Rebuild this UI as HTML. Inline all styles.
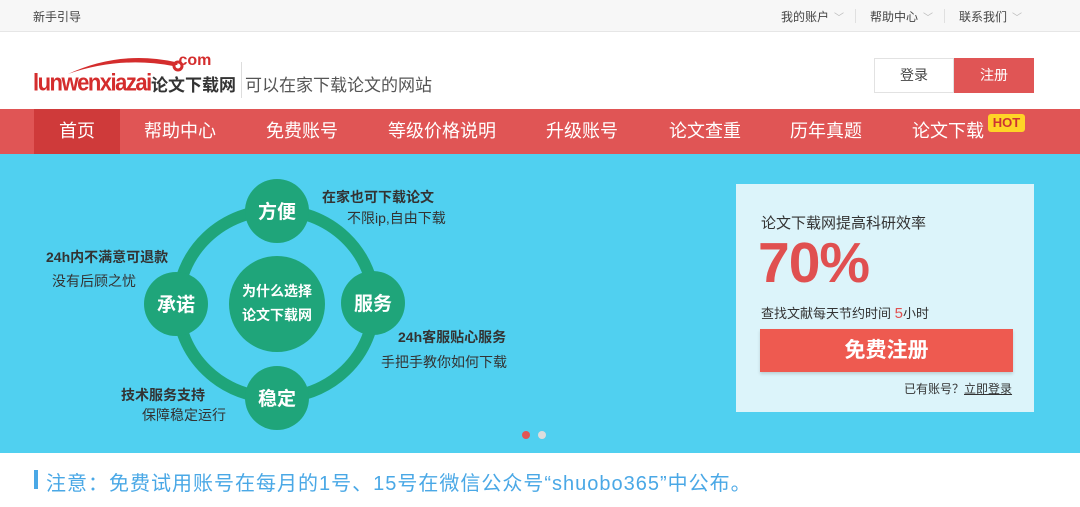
<!DOCTYPE html>
<html><head><meta charset="utf-8"><style>
*{margin:0;padding:0;box-sizing:border-box}
body{width:1080px;height:507px;overflow:hidden;background:#fff;font-family:"Liberation Sans","Noto Sans CJK SC",sans-serif;position:relative}
.top{position:absolute;left:0;top:0;width:1080px;height:32px;background:#f7f7f7;border-bottom:1px solid #e6e6e6;font-size:12px;color:#444}
.top span{position:absolute;top:8px}
.top i{font-style:normal;color:#bbb;font-size:10px;margin-left:5px}
.sep{position:absolute;top:9px;width:1px;height:14px;background:#e0e0e0}
.nav{position:absolute;left:0;top:109px;width:1080px;height:45px;background:#e05555}
.nav .it{position:absolute;top:0;height:45px;line-height:45px;color:#fff;font-size:18px;transform:translateX(-50%);white-space:nowrap}
.banner{position:absolute;left:0;top:154px;width:1080px;height:299px;background:#50d0f0}
.card{position:absolute;left:736px;top:184px;width:298px;height:228px;background:#dcf4fa}
.t{position:absolute;white-space:nowrap;color:#333}
</style></head><body>
<div class="top">
<span style="left:33px">新手引导</span>
<span style="left:781px">我的账户<i>﹀</i></span><div class="sep" style="left:855px"></div>
<span style="left:870px">帮助中心<i>﹀</i></span><div class="sep" style="left:944px"></div>
<span style="left:959px">联系我们<i>﹀</i></span>
</div>
<svg style="position:absolute;left:60px;top:50px" width="150" height="30"><path d="M8 24 Q60 0 115 12 L113 16 Q60 6 8 24Z" fill="#d42d2d"/><circle cx="118" cy="16" r="4" fill="none" stroke="#d42d2d" stroke-width="3"/></svg>
<div class="t" style="left:174px;top:52px;font-size:16px;font-weight:bold;color:#d42d2d">.com</div>
<div class="t" style="left:33px;top:70px;font-size:22px;font-weight:bold;color:#d42d2d;letter-spacing:-1.5px;transform:scaleY(1.1)">lunwenxiazai</div>
<div class="t" style="left:151px;top:71px;font-size:17px;font-weight:bold;color:#333">论文下载网</div>
<div style="position:absolute;left:241px;top:62px;width:1px;height:36px;background:#ddd"></div>
<div class="t" style="left:245px;top:71px;font-size:17px;color:#555">可以在家下载论文的网站</div>
<div style="position:absolute;left:874px;top:58px;width:80px;height:35px;border:1px solid #e2e2e2;text-align:center;line-height:33px;font-size:14px;color:#444">登录</div>
<div style="position:absolute;left:954px;top:58px;width:80px;height:35px;background:#e05555;text-align:center;line-height:35px;font-size:14px;color:#fff">注册</div>
<div class="nav">
<div style="position:absolute;left:34px;top:0;width:86px;height:45px;background:#cf3a3a"></div>
<div class="it" style="left:77px">首页</div>
<div class="it" style="left:180px">帮助中心</div>
<div class="it" style="left:302px">免费账号</div>
<div class="it" style="left:442px">等级价格说明</div>
<div class="it" style="left:582px">升级账号</div>
<div class="it" style="left:705px">论文查重</div>
<div class="it" style="left:826px">历年真题</div>
<div class="it" style="left:948px">论文下载</div>
<div style="position:absolute;left:988px;top:5px;width:37px;height:18px;background:#ffd426;border-radius:3px;font-size:13px;font-weight:bold;color:#c33;text-align:center;line-height:18px">HOT</div>
</div>
<div class="banner"></div>
<svg style="position:absolute;left:0;top:154px" width="540" height="299">
<ellipse cx="276" cy="150" rx="98" ry="94" fill="none" stroke="#1fa57a" stroke-width="12"/>
<g fill="#1fa57a"><circle cx="277" cy="57" r="32"/><circle cx="277" cy="244" r="32"/><circle cx="176" cy="150" r="32"/><circle cx="373" cy="149" r="32"/><circle cx="277" cy="150" r="48"/></g>
<g fill="#fff" font-weight="bold" text-anchor="middle" font-family="Liberation Sans,Noto Sans CJK SC,sans-serif">
<text x="277" y="64" font-size="19">方便</text><text x="277" y="251" font-size="19">稳定</text><text x="176" y="157" font-size="19">承诺</text><text x="373" y="156" font-size="19">服务</text>
<text x="277" y="142" font-size="14">为什么选择</text><text x="277" y="166" font-size="14">论文下载网</text></g>
<g fill="#333" font-family="Liberation Sans,Noto Sans CJK SC,sans-serif" font-size="14">
<text x="322" y="48" font-weight="bold">在家也可下载论文</text><text x="347" y="69">不限ip,自由下载</text>
<text x="46" y="108" font-weight="bold">24h内不满意可退款</text><text x="52" y="132">没有后顾之忧</text>
<text x="398" y="188" font-weight="bold">24h客服贴心服务</text><text x="381" y="213">手把手教你如何下载</text>
<text x="121" y="246" font-weight="bold">技术服务支持</text><text x="142" y="266">保障稳定运行</text></g>
</svg>
<div class="card">
<div class="t" style="left:25px;top:28px;font-size:15px">论文下载网提高科研效率</div>
<div class="t" style="left:22px;top:46px;font-size:57px;font-weight:bold;color:#e05050;letter-spacing:-1px">70%</div>
<div class="t" style="left:25px;top:119px;font-size:13px">查找文献每天节约时间 <span style="color:#e05050;font-size:15px">5</span>小时</div>
<div style="position:absolute;left:24px;top:145px;width:253px;height:43px;background:#ee5a50;box-shadow:0 2px 3px rgba(0,0,0,.15);color:#fff;font-size:21px;font-weight:bold;text-align:center;line-height:43px">免费注册</div>
<div class="t" style="left:168px;top:196px;font-size:12px">已有账号？<u>立即登录</u></div>
</div>
<div style="position:absolute;left:522px;top:431px;width:8px;height:8px;border-radius:50%;background:#e05555"></div>
<div style="position:absolute;left:538px;top:431px;width:8px;height:8px;border-radius:50%;background:#ddd"></div>
<div style="position:absolute;left:34px;top:470px;width:4px;height:19px;background:#4aa8e6"></div>
<div class="t" style="left:46px;top:467px;font-size:20px;color:#4aa8e6;letter-spacing:1px">注意：免费试用账号在每月的1号、15号在微信公众号“shuobo365”中公布。</div>
</body></html>
